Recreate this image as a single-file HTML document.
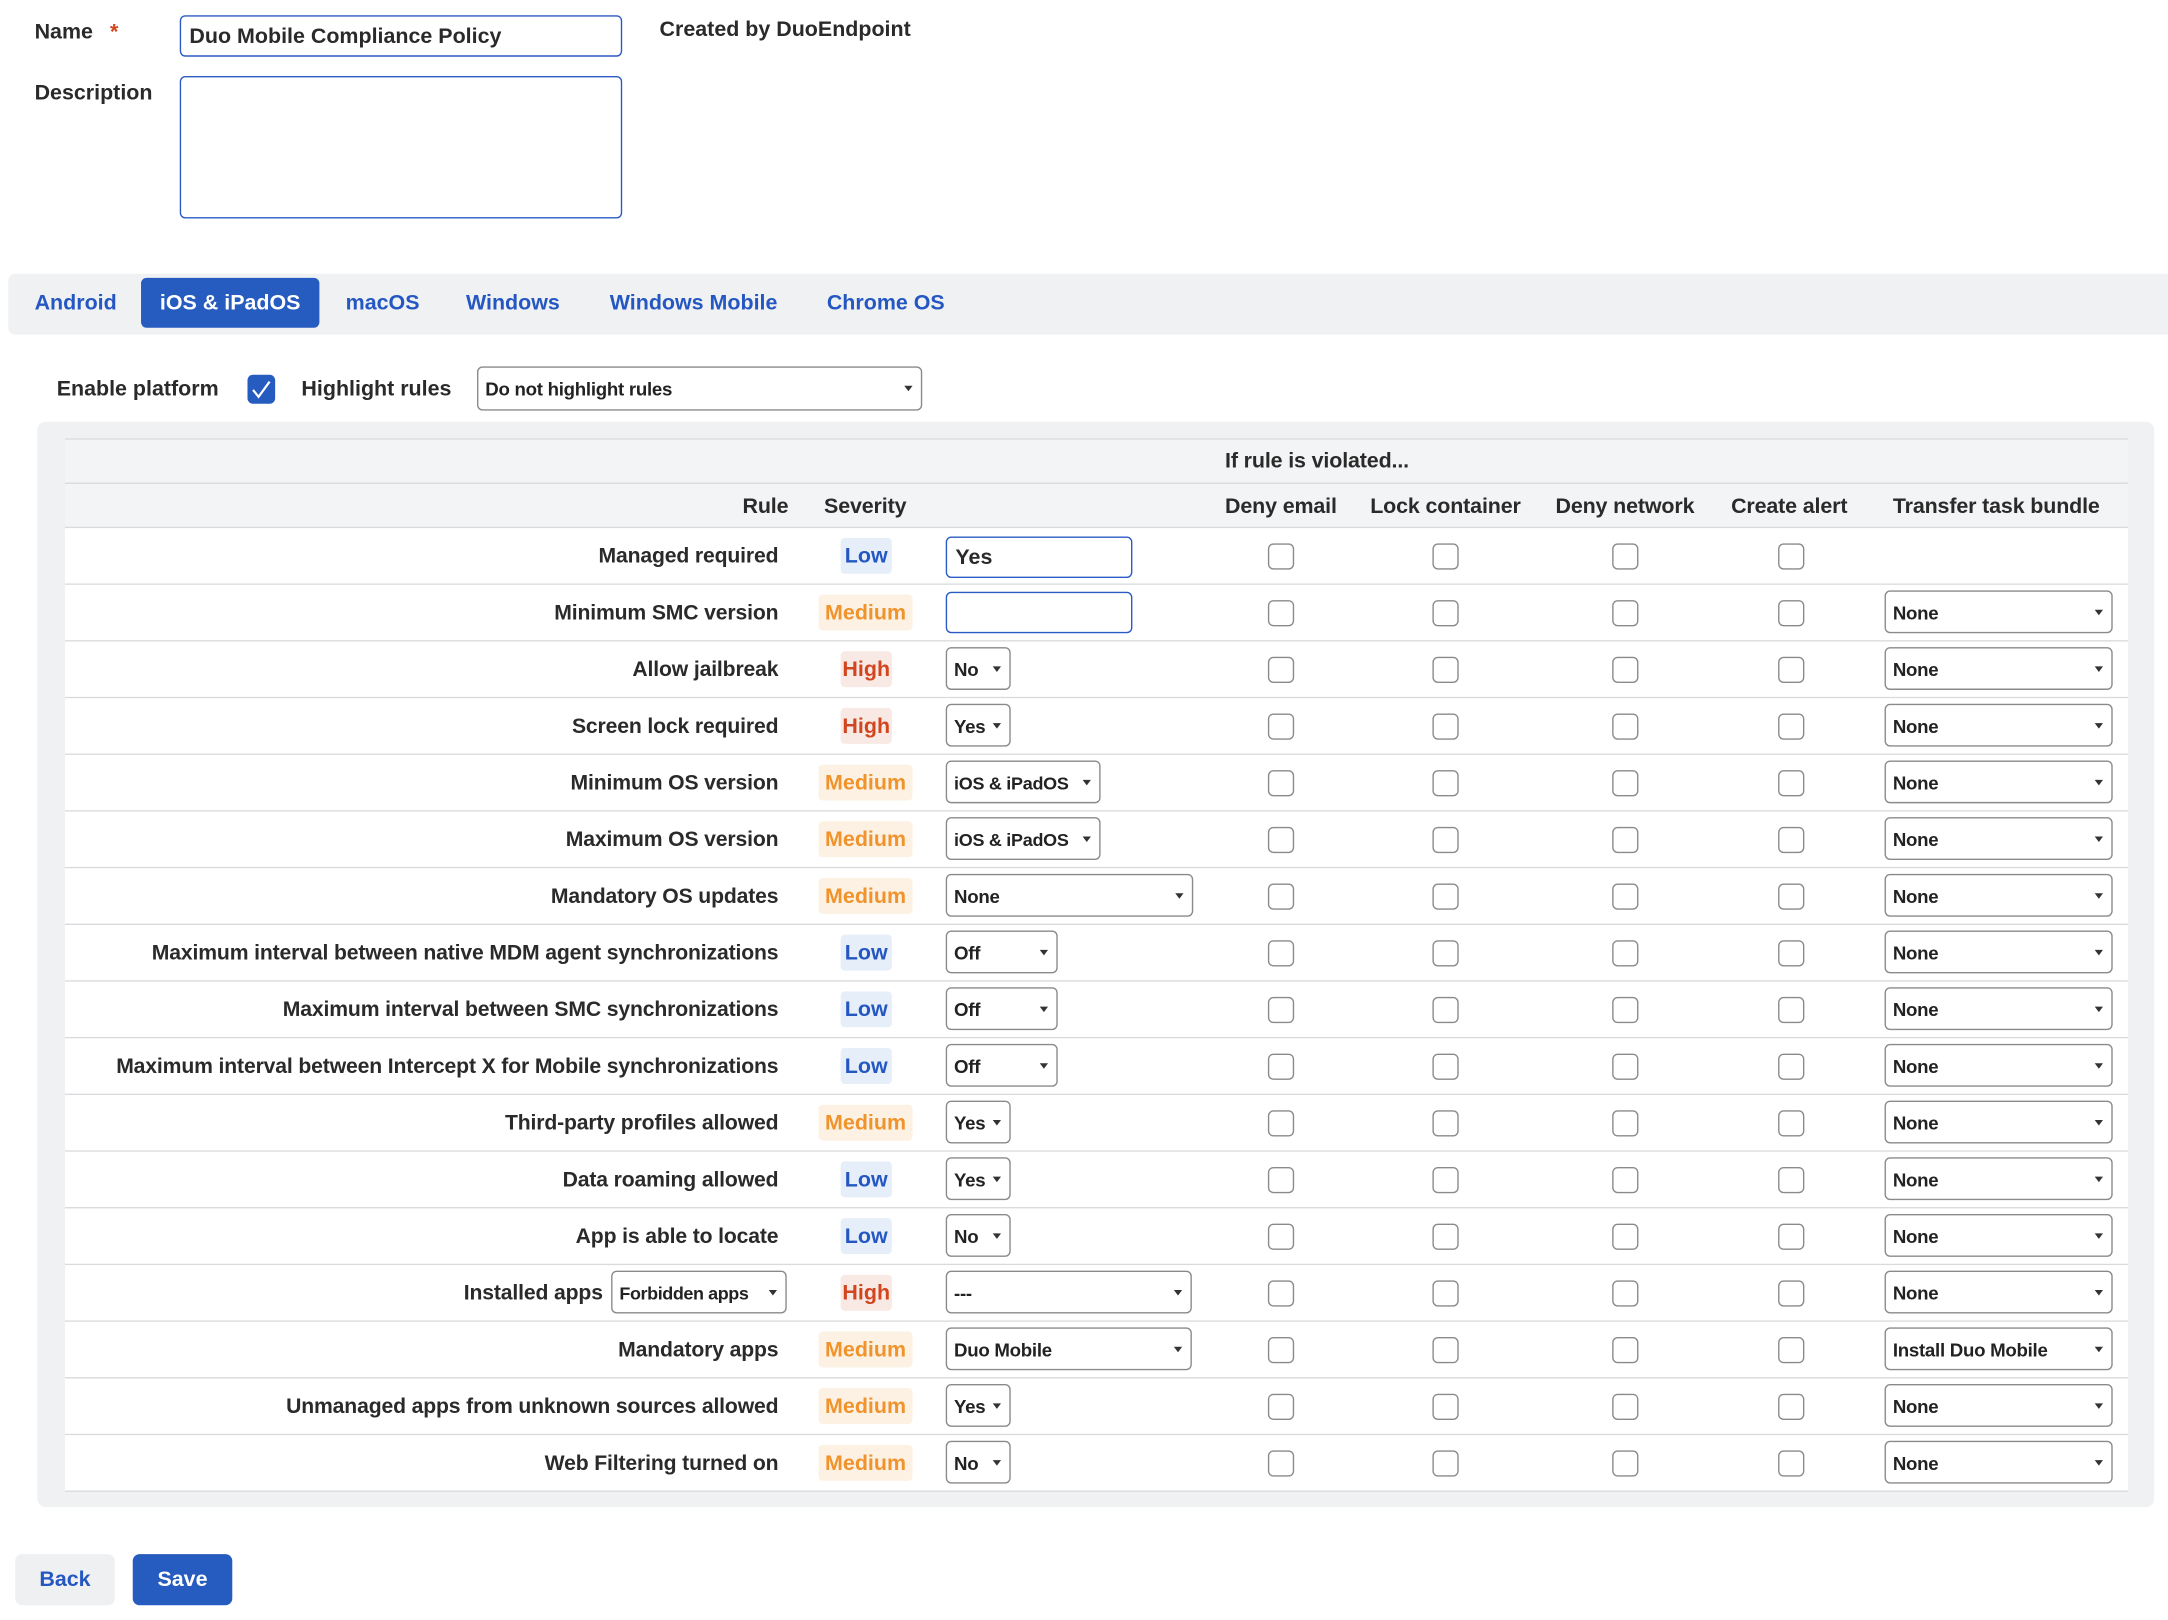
<!DOCTYPE html>
<html><head><meta charset="utf-8"><style>
html,body{margin:0;padding:0;width:2168px;height:1620px;overflow:hidden;background:#fff}
#w{position:absolute;left:0;top:0;width:1568px;height:1172px;transform:scale(1.38265);transform-origin:0 0;font-family:"Liberation Sans",sans-serif;color:#2a2a2a;font-weight:bold;font-size:15.5px}
.a{position:absolute;white-space:nowrap}
.inp{position:absolute;border:1px solid #2a5bc4;border-radius:4px;background:#fff;box-sizing:border-box}
.tab{position:absolute;top:201px;height:36px;line-height:38px;color:#2557c2;font-size:15.5px}
.sel{position:absolute;border:1px solid #8a8a8a;border-radius:4px;background:#fff;box-sizing:border-box;height:31px;line-height:31px;padding-left:5px;font-size:13.5px;letter-spacing:-0.2px;color:#222;white-space:nowrap}
.sel:after{content:"";position:absolute;right:6px;top:13px;border-left:3.5px solid transparent;border-right:3.5px solid transparent;border-top:4.5px solid #333}
.cb{position:absolute;width:19px;height:19px;border:1px solid #8a8a8a;border-radius:4px;top:11px;background:#fff;box-sizing:border-box}
.row{position:absolute;left:47px;width:1492px;height:41px;background:#fff;border-bottom:1px solid #d9dadd;box-sizing:border-box}
.lbl{position:absolute;right:976px;top:0;line-height:42px;white-space:nowrap;font-size:15.3px;letter-spacing:-0.1px}
.b{position:absolute;top:7px;height:26px;line-height:27px;border-radius:3px;text-align:center;font-size:15.5px}
.low{left:561px;width:37px;background:#e6eef9;color:#2557c2}
.med{left:545px;width:68px;background:#fdf1e4;color:#f0932b}
.high{left:561px;width:37px;background:#f8e9e4;color:#d2461f}
.hd{position:absolute;font-size:15.5px;letter-spacing:-0.1px}
</style></head><body><div id="w">
<div class="a" style="left:25px;top:15px;font-size:15.5px">Name <span style="color:#d2461f;margin-left:8px">*</span></div>
<div class="inp" style="left:130px;top:11px;width:320px;height:30px;padding-left:6px;line-height:30px;font-size:15.5px">Duo Mobile Compliance Policy</div>
<div class="a" style="left:477px;top:13px;font-size:15.5px">Created by DuoEndpoint</div>
<div class="a" style="left:25px;top:59px;font-size:15.5px">Description</div>
<div class="inp" style="left:130px;top:55px;width:320px;height:103px"></div>

<div class="a" style="left:6px;top:198px;width:1562px;height:44px;background:#f0f1f3;border-radius:5px 0 0 5px"></div>
<div class="tab" style="left:25px">Android</div>
<div class="tab" style="left:102px;width:129px;background:#265bbf;color:#fff;border-radius:4px;text-align:center">iOS &amp; iPadOS</div>
<div class="tab" style="left:250px">macOS</div>
<div class="tab" style="left:337px">Windows</div>
<div class="tab" style="left:441px">Windows Mobile</div>
<div class="tab" style="left:598px">Chrome OS</div>

<div class="a" style="left:41px;top:273px;font-size:15.5px">Enable platform</div>
<div class="a" style="left:179px;top:271px;width:20px;height:21px;background:#265bbf;border-radius:4px"><svg width="20" height="21" viewBox="0 0 20 21"><path d="M4 11 L8 16 L16 5" stroke="#fff" stroke-width="1.6" fill="none"/></svg></div>
<div class="a" style="left:218px;top:273px;font-size:15.5px">Highlight rules</div>
<div class="sel" style="left:345px;top:265px;width:322px;height:32px;line-height:32px">Do not highlight rules</div>

<div class="a" style="left:27px;top:305px;width:1531px;height:785px;background:#f0f1f3;border-radius:6px"></div>
<div class="a" style="left:47px;top:317px;width:1492px;height:65px;background:#f3f4f6;border-top:1px solid #dcdde0"></div>
<div class="a" style="left:47px;top:349px;width:1492px;height:1px;background:#d9dadd"></div>
<div class="a" style="left:47px;top:381px;width:1492px;height:1px;background:#d9dadd"></div>
<div class="hd" style="left:886px;top:325px">If rule is violated...</div>
<div class="hd" style="left:537px;top:358px">Rule</div>
<div class="hd" style="left:596px;top:358px">Severity</div>
<div class="hd" style="left:886px;top:358px">Deny email</div>
<div class="hd" style="left:991px;top:358px">Lock container</div>
<div class="hd" style="left:1125px;top:358px">Deny network</div>
<div class="hd" style="left:1252px;top:358px">Create alert</div>
<div class="hd" style="left:1369px;top:358px">Transfer task bundle</div>

<div class="row" style="top:382px"><span class="lbl">Managed required</span><span class="b low">Low</span><div class="inp" style="left:637px;top:6px;width:135px;height:30px;padding-left:6px;line-height:30px;font-size:15.5px">Yes</div><span class="cb" style="left:870px"></span><span class="cb" style="left:989px"></span><span class="cb" style="left:1119px"></span><span class="cb" style="left:1239px"></span></div>
<div class="row" style="top:423px"><span class="lbl">Minimum SMC version</span><span class="b med">Medium</span><div class="inp" style="left:637px;top:5px;width:135px;height:30px"></div><span class="cb" style="left:870px"></span><span class="cb" style="left:989px"></span><span class="cb" style="left:1119px"></span><span class="cb" style="left:1239px"></span><span class="sel" style="left:1316px;top:4px;width:165px">None</span></div>
<div class="row" style="top:464px"><span class="lbl">Allow jailbreak</span><span class="b high">High</span><span class="sel" style="left:637px;top:4px;width:47px">No</span><span class="cb" style="left:870px"></span><span class="cb" style="left:989px"></span><span class="cb" style="left:1119px"></span><span class="cb" style="left:1239px"></span><span class="sel" style="left:1316px;top:4px;width:165px">None</span></div>
<div class="row" style="top:505px"><span class="lbl">Screen lock required</span><span class="b high">High</span><span class="sel" style="left:637px;top:4px;width:47px">Yes</span><span class="cb" style="left:870px"></span><span class="cb" style="left:989px"></span><span class="cb" style="left:1119px"></span><span class="cb" style="left:1239px"></span><span class="sel" style="left:1316px;top:4px;width:165px">None</span></div>
<div class="row" style="top:546px"><span class="lbl">Minimum OS version</span><span class="b med">Medium</span><span class="sel" style="left:637px;top:4px;width:112px;font-size:13px">iOS &amp; iPadOS</span><span class="cb" style="left:870px"></span><span class="cb" style="left:989px"></span><span class="cb" style="left:1119px"></span><span class="cb" style="left:1239px"></span><span class="sel" style="left:1316px;top:4px;width:165px">None</span></div>
<div class="row" style="top:587px"><span class="lbl">Maximum OS version</span><span class="b med">Medium</span><span class="sel" style="left:637px;top:4px;width:112px;font-size:13px">iOS &amp; iPadOS</span><span class="cb" style="left:870px"></span><span class="cb" style="left:989px"></span><span class="cb" style="left:1119px"></span><span class="cb" style="left:1239px"></span><span class="sel" style="left:1316px;top:4px;width:165px">None</span></div>
<div class="row" style="top:628px"><span class="lbl">Mandatory OS updates</span><span class="b med">Medium</span><span class="sel" style="left:637px;top:4px;width:179px">None</span><span class="cb" style="left:870px"></span><span class="cb" style="left:989px"></span><span class="cb" style="left:1119px"></span><span class="cb" style="left:1239px"></span><span class="sel" style="left:1316px;top:4px;width:165px">None</span></div>
<div class="row" style="top:669px"><span class="lbl">Maximum interval between native MDM agent synchronizations</span><span class="b low">Low</span><span class="sel" style="left:637px;top:4px;width:81px">Off</span><span class="cb" style="left:870px"></span><span class="cb" style="left:989px"></span><span class="cb" style="left:1119px"></span><span class="cb" style="left:1239px"></span><span class="sel" style="left:1316px;top:4px;width:165px">None</span></div>
<div class="row" style="top:710px"><span class="lbl">Maximum interval between SMC synchronizations</span><span class="b low">Low</span><span class="sel" style="left:637px;top:4px;width:81px">Off</span><span class="cb" style="left:870px"></span><span class="cb" style="left:989px"></span><span class="cb" style="left:1119px"></span><span class="cb" style="left:1239px"></span><span class="sel" style="left:1316px;top:4px;width:165px">None</span></div>
<div class="row" style="top:751px"><span class="lbl">Maximum interval between Intercept X for Mobile synchronizations</span><span class="b low">Low</span><span class="sel" style="left:637px;top:4px;width:81px">Off</span><span class="cb" style="left:870px"></span><span class="cb" style="left:989px"></span><span class="cb" style="left:1119px"></span><span class="cb" style="left:1239px"></span><span class="sel" style="left:1316px;top:4px;width:165px">None</span></div>
<div class="row" style="top:792px"><span class="lbl">Third-party profiles allowed</span><span class="b med">Medium</span><span class="sel" style="left:637px;top:4px;width:47px">Yes</span><span class="cb" style="left:870px"></span><span class="cb" style="left:989px"></span><span class="cb" style="left:1119px"></span><span class="cb" style="left:1239px"></span><span class="sel" style="left:1316px;top:4px;width:165px">None</span></div>
<div class="row" style="top:833px"><span class="lbl">Data roaming allowed</span><span class="b low">Low</span><span class="sel" style="left:637px;top:4px;width:47px">Yes</span><span class="cb" style="left:870px"></span><span class="cb" style="left:989px"></span><span class="cb" style="left:1119px"></span><span class="cb" style="left:1239px"></span><span class="sel" style="left:1316px;top:4px;width:165px">None</span></div>
<div class="row" style="top:874px"><span class="lbl">App is able to locate</span><span class="b low">Low</span><span class="sel" style="left:637px;top:4px;width:47px">No</span><span class="cb" style="left:870px"></span><span class="cb" style="left:989px"></span><span class="cb" style="left:1119px"></span><span class="cb" style="left:1239px"></span><span class="sel" style="left:1316px;top:4px;width:165px">None</span></div>
<div class="row" style="top:915px"><span class="lbl" style="right:1103px">Installed apps</span><span class="sel" style="left:395px;top:4px;width:127px;font-size:13px;letter-spacing:-0.3px">Forbidden apps</span><span class="b high">High</span><span class="sel" style="left:637px;top:4px;width:178px">---</span><span class="cb" style="left:870px"></span><span class="cb" style="left:989px"></span><span class="cb" style="left:1119px"></span><span class="cb" style="left:1239px"></span><span class="sel" style="left:1316px;top:4px;width:165px">None</span></div>
<div class="row" style="top:956px"><span class="lbl">Mandatory apps</span><span class="b med">Medium</span><span class="sel" style="left:637px;top:4px;width:178px">Duo Mobile</span><span class="cb" style="left:870px"></span><span class="cb" style="left:989px"></span><span class="cb" style="left:1119px"></span><span class="cb" style="left:1239px"></span><span class="sel" style="left:1316px;top:4px;width:165px">Install Duo Mobile</span></div>
<div class="row" style="top:997px"><span class="lbl">Unmanaged apps from unknown sources allowed</span><span class="b med">Medium</span><span class="sel" style="left:637px;top:4px;width:47px">Yes</span><span class="cb" style="left:870px"></span><span class="cb" style="left:989px"></span><span class="cb" style="left:1119px"></span><span class="cb" style="left:1239px"></span><span class="sel" style="left:1316px;top:4px;width:165px">None</span></div>
<div class="row" style="top:1038px"><span class="lbl">Web Filtering turned on</span><span class="b med">Medium</span><span class="sel" style="left:637px;top:4px;width:47px">No</span><span class="cb" style="left:870px"></span><span class="cb" style="left:989px"></span><span class="cb" style="left:1119px"></span><span class="cb" style="left:1239px"></span><span class="sel" style="left:1316px;top:4px;width:165px">None</span></div>

<div class="a" style="left:11px;top:1124px;width:72px;height:37px;line-height:38px;text-align:center;background:#eff0f2;border-radius:5px;color:#2557c2;font-size:15.5px">Back</div>
<div class="a" style="left:96px;top:1124px;width:72px;height:37px;line-height:38px;text-align:center;background:#265bbf;border-radius:5px;color:#fff;font-size:15.5px">Save</div>
</div></body></html>
